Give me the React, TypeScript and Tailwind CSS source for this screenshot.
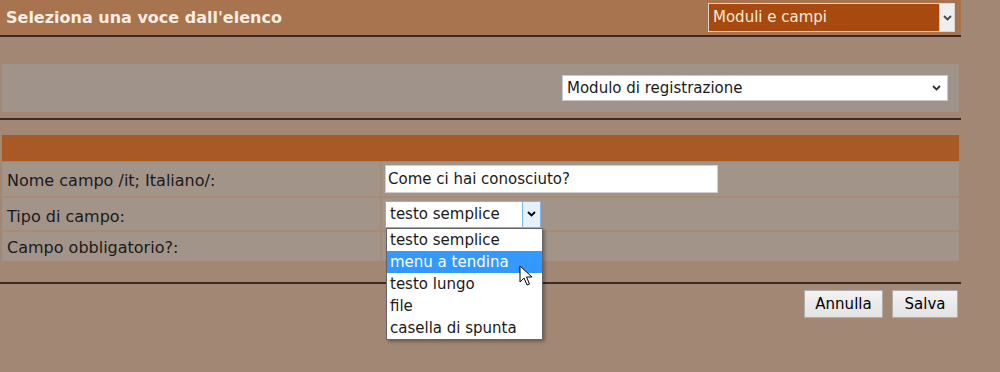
const font = { fontFamily: '"DejaVu Sans", Verdana, sans-serif' }

function Chevron({ className }: { className?: string }) {
  return (
    <svg width="9" height="6" viewBox="0 0 9 6" className={className}>
      <path d="M1 1 L4.5 4.5 L8 1" fill="none" stroke="currentColor" strokeWidth="1.8" />
    </svg>
  )
}

const options = ["testo semplice", "menu a tendina", "testo lungo", "file", "casella di spunta"]

export default function App() {
  return (
    <div className="w-[1000px] h-[372px] bg-[#a38775] text-[16px] text-[#1a1a1a] overflow-hidden" style={font}>
      <div className="w-[961px]">
        {/* header */}
        <div className="h-[37px] bg-[#a8744f] border-b-2 border-[#3b2b22] flex items-center justify-between pl-[6px] pr-[6px]">
          <span className="text-[16px] font-bold text-[#f6ede2]">Seleziona una voce dall'elenco</span>
          <div className="w-[247px] h-[29px] border border-[#d8d4d0] bg-[#a84a10] flex items-center">
            <span className="flex-1 pl-[4px] text-[15px] text-[#f6ecd9]">Moduli e campi</span>
            <div className="w-[15px] h-[27px] bg-[#eeeeee] border-l border-[#c8c8c8] flex items-center justify-center text-[#444]">
              <Chevron />
            </div>
          </div>
        </div>

        <div className="h-[27px]" />

        {/* module box */}
        <div className="mx-[2px] h-[48px] bg-[#a09389] flex items-center justify-end pr-[11px]">
          <div className="w-[386px] h-[26px] bg-white border border-[#c9c9c9] flex items-center justify-between pl-[4px] pr-[6px]">
            <span className="text-[15px]">Modulo di registrazione</span>
            <Chevron className="text-[#333]" />
          </div>
        </div>

        <div className="h-[6px]" />
        <div className="h-[2px] bg-[#3b2b22]" />
        <div className="h-[15px]" />

        {/* form table */}
        <div className="mx-[2px] h-[26px] bg-[#a75a26]" />
        <div className="mx-[2px] mt-[1px] grid grid-cols-[378px_1fr] gap-[2px] bg-[#a98a76]">
          <div className="h-[34px] bg-[#a39489] flex items-center pl-[5px] pt-[4px]">Nome campo /it; Italiano/:</div>
          <div className="h-[34px] bg-[#a39489] flex items-center pl-[3px]">
            <div className="w-[333px] h-[28px] bg-white border border-[#cfcfcf] flex items-center pl-[2px] text-[15px]">
              Come ci hai conosciuto?
            </div>
          </div>
          <div className="h-[32px] bg-[#a39489] flex items-center pl-[5px] pt-[6px]">Tipo di campo:</div>
          <div className="h-[32px] bg-[#a39489] flex items-center pl-[3px] relative">
            <div className="w-[156px] h-[27px] bg-white border border-[#7eb4ea] flex items-center">
              <span className="flex-1 pl-[4px] text-[15px]">testo semplice</span>
              <div className="w-[18px] h-[25px] bg-[#e5f1fb] border-l border-[#7eb4ea] flex items-center justify-center text-black">
                <Chevron />
              </div>
            </div>
            {/* open list */}
            <div className="absolute left-[4px] top-[30px] z-10 w-[157px] bg-white border border-[#646464] shadow-[2px_2px_3px_rgba(0,0,0,0.3)] text-[15px]">
              {options.map((o) => (
                <div
                  key={o}
                  className={
                    o === "menu a tendina"
                      ? "h-[22px] leading-[22px] pl-[3px] bg-[#3399ff] text-white"
                      : "h-[22px] leading-[22px] pl-[3px]"
                  }
                >
                  {o}
                </div>
              ))}
              <svg className="absolute left-[132px] top-[36px]" width="14" height="22" viewBox="0 0 14 22">
                <path
                  d="M1 1 L1 17 L5 13 L8 20 L10.5 19 L7.5 12 L13 12 Z"
                  fill="white"
                  stroke="black"
                  strokeWidth="1"
                  strokeLinejoin="round"
                />
              </svg>
            </div>
          </div>
          <div className="h-[29px] bg-[#a39489] flex items-center pl-[5px] pt-[3px]">Campo obbligatorio?:</div>
          <div className="h-[29px] bg-[#a39489]" />
        </div>

        <div className="h-[21px]" />
        <div className="h-[2px] bg-[#3b2b22]" />

        <div className="flex justify-end gap-[9px] pr-[3px] mt-[6px]">
          <button className="w-[79px] h-[28px] border border-[#adadad] bg-gradient-to-b from-[#f2f2f2] to-[#e3e3e3] text-[15px] text-black">
            Annulla
          </button>
          <button className="w-[66px] h-[28px] border border-[#adadad] bg-gradient-to-b from-[#f2f2f2] to-[#e3e3e3] text-[15px] text-black">
            Salva
          </button>
        </div>
      </div>
    </div>
  )
}
